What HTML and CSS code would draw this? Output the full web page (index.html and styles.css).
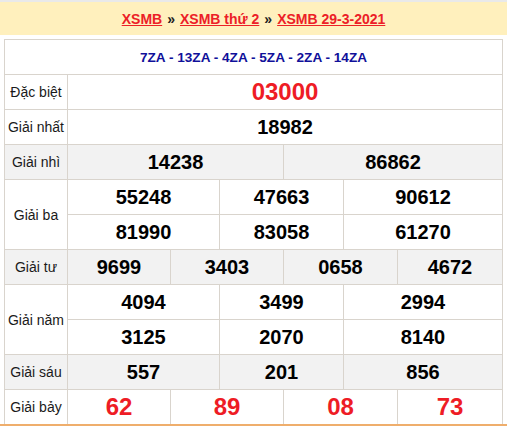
FILE: index.html
```html
<!DOCTYPE html>
<html lang="vi">
<head>
<meta charset="utf-8">
<link rel="stylesheet" href="styles.css">
</head>
<body>
<div class="topline"></div>
<div class="crumbs">
  <a href="#">XSMB</a> <span class="sep">»</span> <a href="#">XSMB thứ 2</a> <span class="sep">»</span> <a href="#">XSMB 29-3-2021</a>
</div>
<div class="result">
  <div class="cell head s7">7ZA - 13ZA - 4ZA - 5ZA - 2ZA - 14ZA</div>

  <div class="cell label">Đặc biệt</div>
  <div class="cell num special s6">03000</div>

  <div class="cell label">Giải nhất</div>
  <div class="cell num s6">18982</div>

  <div class="cell label alt">Giải nhì</div>
  <div class="cell num alt s3">14238</div>
  <div class="cell num alt s3">86862</div>

  <div class="cell label r2">Giải ba</div>
  <div class="cell num s2">55248</div>
  <div class="cell num s2">47663</div>
  <div class="cell num s2">90612</div>
  <div class="cell num s2">81990</div>
  <div class="cell num s2">83058</div>
  <div class="cell num s2">61270</div>

  <div class="cell label alt">Giải tư</div>
  <div class="cell num alt">9699</div>
  <div class="cell num alt s2">3403</div>
  <div class="cell num alt s2">0658</div>
  <div class="cell num alt">4672</div>

  <div class="cell label r2">Giải năm</div>
  <div class="cell num s2">4094</div>
  <div class="cell num s2">3499</div>
  <div class="cell num s2">2994</div>
  <div class="cell num s2">3125</div>
  <div class="cell num s2">2070</div>
  <div class="cell num s2">8140</div>

  <div class="cell label alt">Giải sáu</div>
  <div class="cell num alt s2">557</div>
  <div class="cell num alt s2">201</div>
  <div class="cell num alt s2">856</div>

  <div class="cell label">Giải bảy</div>
  <div class="cell num red">62</div>
  <div class="cell num red s2">89</div>
  <div class="cell num red s2">08</div>
  <div class="cell num red">73</div>
</div>
<div class="bottomline"></div>
</body>
</html>
```

FILE: styles.css
```css
html, body {
  margin: 0;
  padding: 0;
  background: #ffffff;
  font-family: "Liberation Sans", Arial, sans-serif;
}

.topline {
  height: 2px;
  background: #e9e9e9;
}

.crumbs {
  height: 33px;
  background: #fff0bd;
  display: flex;
  align-items: center;
  justify-content: center;
  gap: 5px;
  font-size: 14px;
  font-weight: bold;
  padding-top: 1px;
  box-sizing: border-box;
}

.crumbs a {
  color: #ec2027;
  text-decoration: underline;
}

.crumbs .sep {
  color: #222;
  font-weight: bold;
}

.result {
  margin: 4px 0 0 4px;
  width: 499px;
  box-sizing: border-box;
  padding: 1px 1px 0 1px;
  display: grid;
  grid-template-columns: 62px 102px 48px 63px 59px 53px 104px;
  grid-auto-rows: 34px;
  gap: 1px;
  background: #d9d4cd;
}

.cell {
  background: #ffffff;
  display: flex;
  align-items: center;
  justify-content: center;
}

.cell.alt {
  background: #f2f2f2;
}

.s2 { grid-column: span 2; }
.s3 { grid-column: span 3; }
.s6 { grid-column: span 6; }
.s7 { grid-column: span 7; }
.r2 { grid-row: span 2; }

.head {
  color: #10109a;
  font-weight: bold;
  font-size: 13.6px;
}

.label {
  font-size: 14px;
  color: #1a1a1a;
}

.num {
  font-size: 20px;
  font-weight: bold;
  color: #000;
}

.num.special,
.num.red {
  color: #ee1c25;
  font-size: 24px;
}

.bottomline {
  height: 2px;
  background: #efae6c;
}
```
